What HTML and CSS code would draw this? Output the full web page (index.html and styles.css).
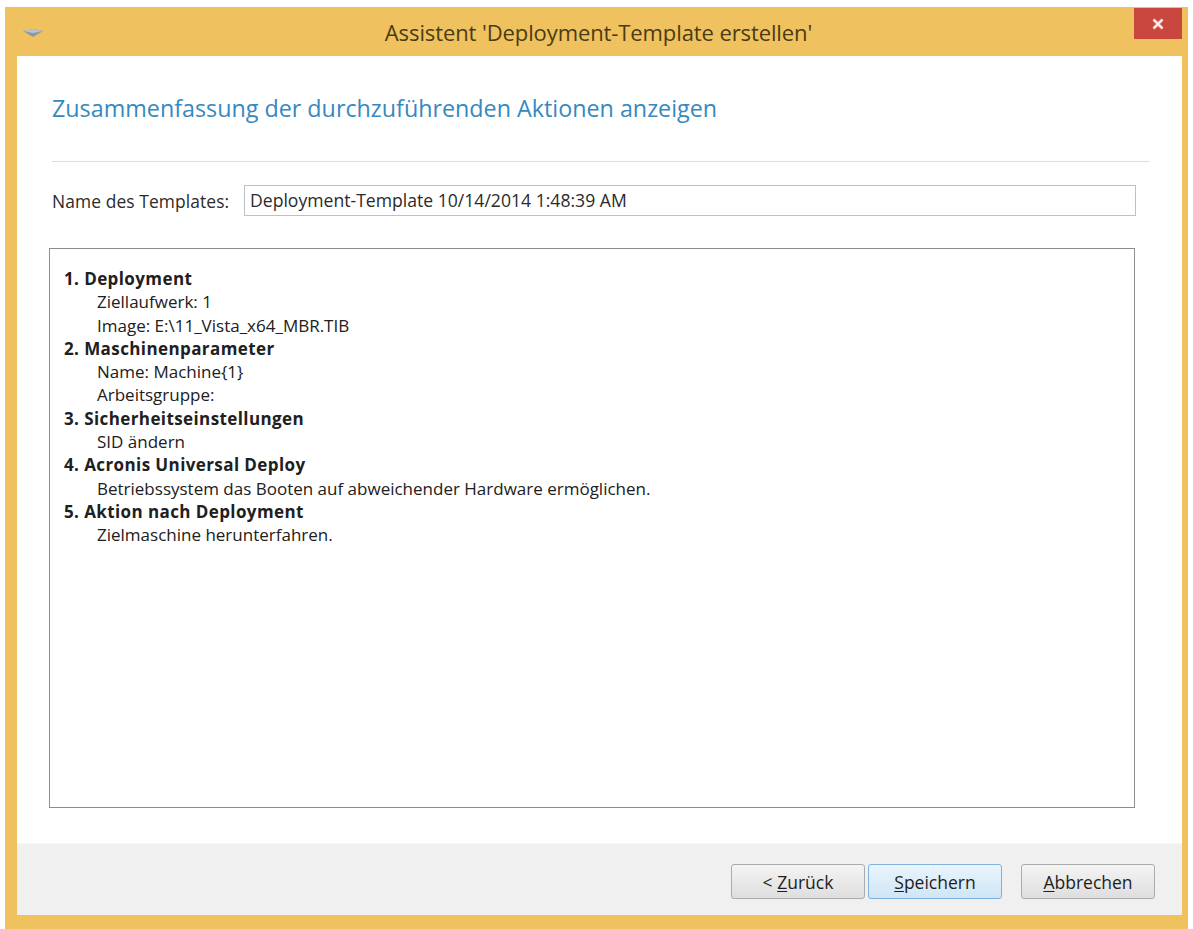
FILE: index.html
```html
<!DOCTYPE html>
<html lang="de">
<head>
	<meta charset="UTF-8">
	<title>Assistent 'Deployment-Template erstellen'</title>
	<link rel="stylesheet" href="styles.css">
</head>
<body>
	<div class="window">
		<div class="titlebar">
			<svg class="sysicon" width="22" height="10" viewBox="0 0 22 10">
				<path d="M1 3 L11 1 L21 3 L11 9 Z" fill="#8a98a6"/>
				<path d="M1 3 L11 1 L21 3 L11 5 Z" fill="#b7c2cc"/>
			</svg>
			<div class="title">Assistent 'Deployment-Template erstellen'</div>
			<div class="closebtn">
				<svg width="12" height="12" viewBox="0 0 12 12">
					<path d="M1.5 1.5 L10.5 10.5 M10.5 1.5 L1.5 10.5" stroke="#fbe9e6" stroke-width="2.6"/>
				</svg>
			</div>
		</div>
		<div class="client">
			<div class="content">
				<h1 class="heading">Zusammenfassung der durchzuführenden Aktionen anzeigen</h1>
				<div class="separator"></div>
				<div class="namerow">
					<span class="label">Name des Templates:</span>
					<div class="textbox">Deployment-Template 10/14/2014 1:48:39 AM</div>
				</div>
				<div class="summary">
					<div class="item">1. Deployment</div>
					<div class="sub">Ziellaufwerk: 1</div>
					<div class="sub">Image: E:\11_Vista_x64_MBR.TIB</div>
					<div class="item">2. Maschinenparameter</div>
					<div class="sub">Name: Machine{1}</div>
					<div class="sub">Arbeitsgruppe:</div>
					<div class="item">3. Sicherheitseinstellungen</div>
					<div class="sub">SID ändern</div>
					<div class="item">4. Acronis Universal Deploy</div>
					<div class="sub">Betriebssystem das Booten auf abweichender Hardware ermöglichen.</div>
					<div class="item">5. Aktion nach Deployment</div>
					<div class="sub">Zielmaschine herunterfahren.</div>
				</div>
			</div>
			<div class="footer">
				<div class="button">&lt; <u>Z</u>urück</div>
				<div class="button default"><u>S</u>peichern</div>
				<div class="button cancel"><u>A</u>bbrechen</div>
			</div>
		</div>
	</div>
</body>
</html>
```

FILE: styles.css
```css
html, body {
	margin: 0;
	padding: 0;
	background: #ffffff;
	overflow: hidden;
}
body {
	font-family: "Open Sans", "Noto Sans", sans-serif;
	color: #262626;
}
.window {
	margin: 7px 0 0 5px;
	width: 1183px;
	height: 940px;
	background: #efc25f;
	box-sizing: border-box;
	padding: 0 6px 0 12px;
	display: flex;
	flex-direction: column;
	position: relative;
}
.titlebar {
	height: 49px;
	display: flex;
	align-items: center;
	justify-content: center;
	flex-shrink: 0;
}
.sysicon {
	position: absolute;
	left: 17px;
	top: 21px;
}
.title {
	font-size: 22px;
	color: #4a3c14;
	margin-top: 0;
	margin-left: -2px;
	letter-spacing: -0.1px;
}
.closebtn {
	position: absolute;
	top: 1px;
	right: 6px;
	width: 48px;
	height: 31px;
	background: #c9473e;
	display: flex;
	align-items: center;
	justify-content: center;
}
.client {
	width: 1165px;
	height: 859px;
	background: #ffffff;
	display: flex;
	flex-direction: column;
	flex-shrink: 0;
}
.content {
	flex: 1;
	padding: 0 32px 0 32px;
}
.heading {
	margin: 29px 0 0 3px;
	font-size: 23.3px;
	font-weight: normal;
	color: #3589bf;
	line-height: 46px;
}
.separator {
	margin: 30px 0 0 3px;
	height: 1px;
	background: #d2e2ec;
}
.namerow {
	margin-top: 23px;
	display: flex;
	align-items: center;
	margin-left: 3px;
}
.label {
	font-size: 17.4px;
	width: 192px;
	color: #2a2a2a;
	letter-spacing: 0.1px;
}
.textbox {
	width: 892px;
	height: 31px;
	box-sizing: border-box;
	border: 1px solid #b5c3cf;
	font-size: 17.6px;
	line-height: 29px;
	padding-left: 5px;
	color: #2a2a2a;
}
.summary {
	margin-top: 32px;
	width: 1086px;
	height: 560px;
	box-sizing: border-box;
	border: 1px solid #8d8d8d;
	padding: 18px 14px;
	font-size: 17px;
	line-height: 23.3px;
	color: #202020;
}
.item {
	font-weight: bold;
	letter-spacing: 0.4px;
}
.sub {
	padding-left: 33px;
}
.footer {
	height: 72px;
	background: #f0f0f0;
	border-top: 1px solid #f6f6f6;
	box-sizing: border-box;
	display: flex;
	justify-content: flex-end;
	align-items: flex-start;
	padding: 20px 27px 0 0;
}
.button {
	width: 134px;
	height: 35px;
	box-sizing: border-box;
	border: 1px solid #acacac;
	border-radius: 3px;
	background: linear-gradient(#f4f4f4, #dedede);
	font-size: 17.5px;
	line-height: 35px;
	text-align: center;
	color: #1e1e1e;
}
.button u {
	text-decoration-thickness: 1px;
	text-underline-offset: 2px;
}
.default {
	margin-left: 3px;
	border-color: #7db2df;
	background: linear-gradient(#eaf4fc, #cfe6f6);
}
.cancel {
	margin-left: 19px;
}
```
